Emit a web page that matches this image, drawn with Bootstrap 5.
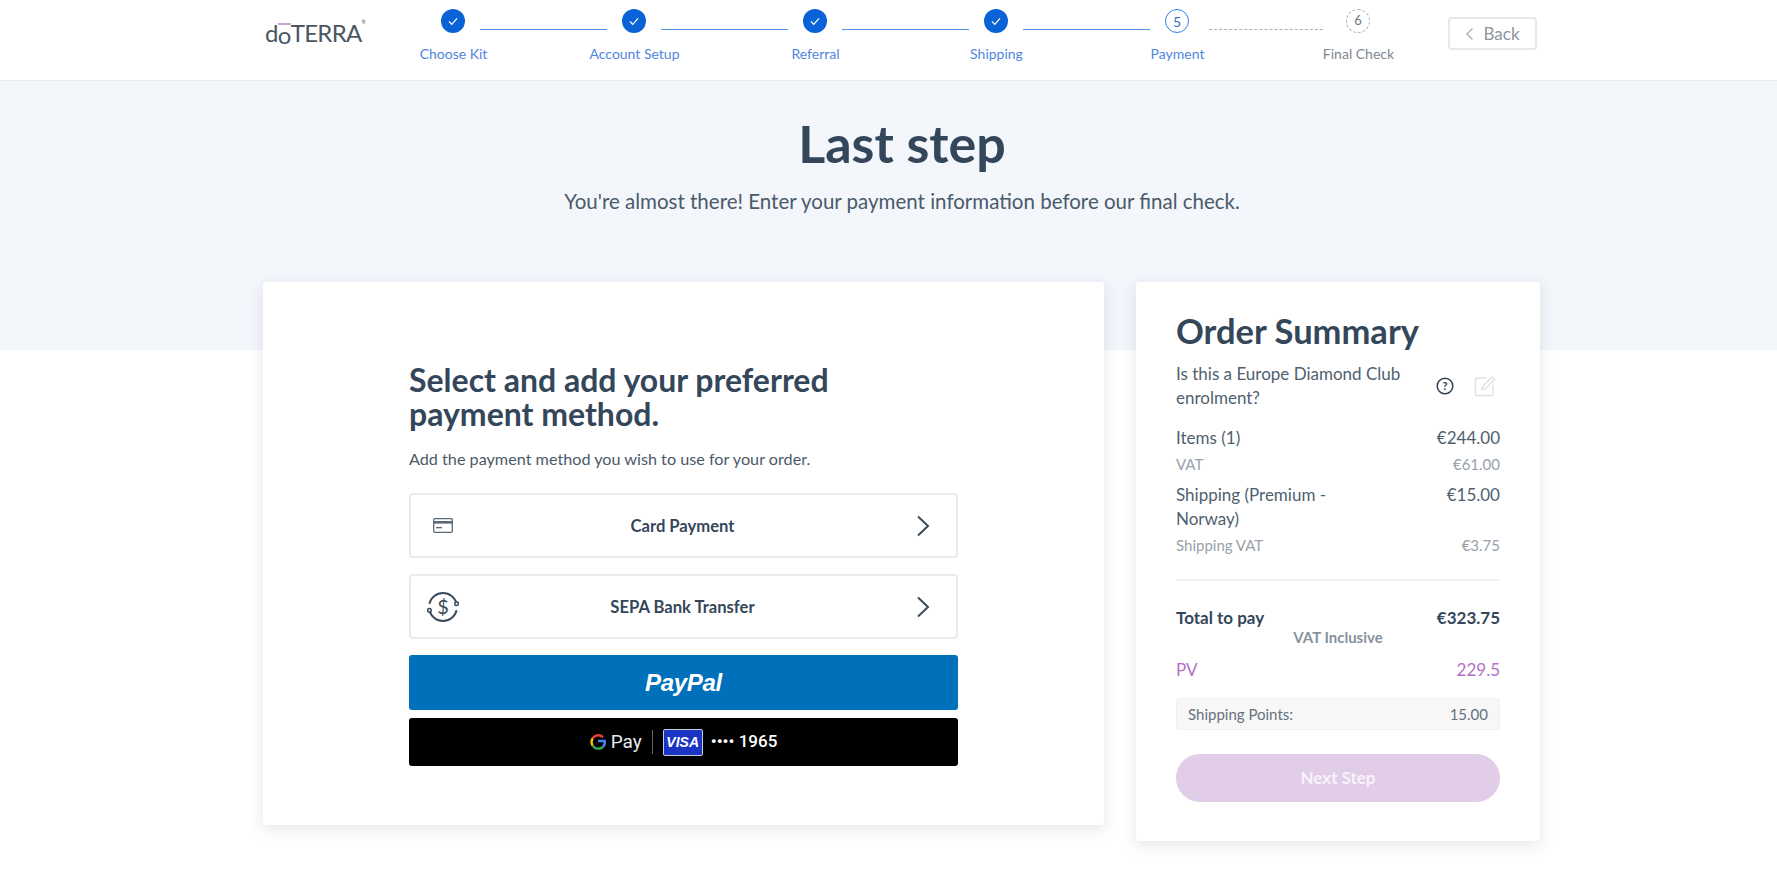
<!DOCTYPE html>
<html lang="en">
<head>
    <meta charset="UTF-8">
    <meta content="width=device-width, initial-scale=1.0" name="viewport">
    <title>doTERRA - Payment</title>
    <link href="https://cdn.jsdelivr.net/npm/bootstrap@5.3.0/dist/css/bootstrap.min.css" rel="stylesheet">
    <style>
        body { font-family: "Lato", "Open Sans", sans-serif; color: #34475a; background: #fff; }
        .top-bar { height: 81px; border-bottom: 1px solid #e9ebee; box-shadow: 0 1px 2px rgba(0,0,0,.03); }
        .top-inner { width: 1277px; margin-left: 263px; padding-left: 2px; }
        .brand { width: 160px; height: 66px; font-size: 24px; letter-spacing: -.7px; color: #4a5661; line-height: 1; }
        .brand-o { display: inline-block; line-height: .8; border-top: 2px solid #c7a3d2; margin-top: 1px; }
        .brand sup { font-size: 5px; top: -2.2em; }
        .stepper { width: 1086px; }
        .step-track { padding-left: 16px; height: 25px; margin-top: 9px; }
        .step-dot { width: 24px; height: 24px; border-radius: 50%; flex: none; font-size: 13px; color: #6d7782; }
        .step-done { background: #0a63d6; }
        .step-now { border: 1px solid #2f7fe6; color: #3d6fb8; font-size: 14px; }
        .step-next { border: 1px dashed #a9b0b8; }
        .step-line { width: 127px; margin: 20px 15px 0; border-top: 1px solid #4f95ea; flex: none; }
        .step-line-dash { border-top: 1px dashed #a9b0b8; width: 114px; margin-left: 20px; margin-right: 23px; }
        .step-labels { margin-top: 11px; margin-left: -62px; font-size: 14px; color: #4f86dd; line-height: 18px; }
        .step-labels > div { width: 181px; text-align: center; }
        .step-labels .step-off { color: #7f8892; }
        .back-btn { width: 89px; height: 33px; border: 2px solid #e6e8ea; border-radius: 4px; color: #8d96a0; font-size: 17px; padding: 0; background: #fff; margin: 8px 0 0 78px; flex: none; }
        .hero { height: 269px; background: #f3f6fb; padding: 32px 0 0 27px; }
        .hero h1 { font-size: 52px; font-weight: 700; color: #34475a; line-height: 60px; margin: 0; }
        .hero p { font-size: 20.5px; color: #4a5a6a; margin: 14px 0 0; line-height: 28px; }
        .page-cols { width: 1277px; margin: -68px 0 0 263px; gap: 32px; padding-bottom: 30px; }
        .sheet { background: #fff; border: 0; border-radius: 4px; box-shadow: 0 4px 16px rgba(40,60,90,.13); }
        .pay-sheet { width: 841px; height: 543px; padding: 81px 146px 0; }
        .pay-sheet h2 { font-size: 32px; font-weight: 700; line-height: 34px; margin: 0; color: #34475a; }
        .pay-note { font-size: 16.2px; line-height: 24px; margin: 16px 0 22px; color: #4a5a6a; }
        .pay-option { height: 65px; border: 2px solid #e9ebed; border-radius: 4px; background: #fff; margin-bottom: 16px; padding: 0; color: #34475a; font-size: 16.6px; font-weight: 700; }
        .pay-icon { width: 64px; flex: none; }
        .pay-arrow { width: 66px; flex: none; }
        .pay-label { padding-top: 2px; }
        .paypal-btn { height: 55px; background: #0070ba; border-radius: 3px; color: #fff; font-family: "Liberation Sans", sans-serif; font-weight: 700; font-style: italic; font-size: 24px; letter-spacing: -.3px; margin-bottom: 8px; padding: 0; }
        .gpay-btn { height: 48px; background: #000; border-radius: 3px; color: #fff; padding: 0; gap: 8px; font-family: "Roboto", sans-serif; }
        .gpay-word { font-size: 19px; color: #e8eaed; margin-left: -3px; }
        .gpay-bar { width: 1px; height: 24px; background: #5f6368; margin: 0 2px; }
        .visa-tag { width: 40px; height: 27px; background: #1a35c4; border: 1px solid #c9ccd4; border-radius: 2px; font: italic 700 14px "Liberation Sans", sans-serif; color: #fff; }
        .card-dots { font-size: 17px; font-weight: 500; color: #fff; }
        .sum-sheet { width: 404px; height: 559px; padding: 26px 40px 0; }
        .sum-sheet h3 { font-size: 34.5px; font-weight: 700; line-height: 46px; margin: 0 0 8px; color: #34475a; }
        .sum-row { font-size: 17px; line-height: 24px; color: #4f5f6f; }
        .sum-tools { gap: 20px; margin-right: 4px; }
        .sum-minor { font-size: 15px; line-height: 20px; color: #98a1aa; margin: 4px 0 9px; }
        .sum-rule { border-top: 2px solid #eef0f2; margin: 24px 0 25px; }
        .sum-total { font-size: 17px; font-weight: 700; line-height: 24px; color: #34475a; }
        .sum-vat { font-size: 15px; font-weight: 700; line-height: 18px; color: #87929c; text-align: center; margin: -2px 0 12px; }
        .sum-pv { font-size: 17px; line-height: 24px; color: #b56fc7; }
        .ship-points { height: 32px; margin-top: 16px; padding: 0 11px; background: #f7f7f8; border: 1px solid #eff0f1; border-radius: 4px; font-size: 15px; color: #66727e; }
        .next-btn { height: 48px; width: 100%; margin-top: 24px; border: 0; border-radius: 24px; background: #e2cde8; color: #f8f2fa; font-size: 17px; font-weight: 700; }
    </style>
</head>
<body>
<header class="top-bar">
    <div class="top-inner d-flex">
        <div class="brand d-flex align-items-center">d<span class="brand-o">o</span>TERRA<sup>®</sup></div>
        <div class="stepper">
            <div class="step-track d-flex align-items-start">
                <span class="step-dot step-done d-flex align-items-center justify-content-center"><svg width="12" height="12" viewBox="0 0 12 12"><path d="M2 6.5l2.800 2.800L10 3.400" fill="none" stroke="#fff" stroke-width="1.2"/></svg></span>
                <span class="step-line"></span>
                <span class="step-dot step-done d-flex align-items-center justify-content-center"><svg width="12" height="12" viewBox="0 0 12 12"><path d="M2 6.5l2.800 2.800L10 3.400" fill="none" stroke="#fff" stroke-width="1.2"/></svg></span>
                <span class="step-line"></span>
                <span class="step-dot step-done d-flex align-items-center justify-content-center"><svg width="12" height="12" viewBox="0 0 12 12"><path d="M2 6.5l2.800 2.800L10 3.400" fill="none" stroke="#fff" stroke-width="1.2"/></svg></span>
                <span class="step-line"></span>
                <span class="step-dot step-done d-flex align-items-center justify-content-center"><svg width="12" height="12" viewBox="0 0 12 12"><path d="M2 6.5l2.800 2.800L10 3.400" fill="none" stroke="#fff" stroke-width="1.2"/></svg></span>
                <span class="step-line"></span>
                <span class="step-dot step-now d-flex align-items-center justify-content-center">5</span>
                <span class="step-line step-line-dash"></span>
                <span class="step-dot step-next d-flex align-items-center justify-content-center">6</span>
                <button class="btn back-btn d-flex align-items-center justify-content-center gap-2" type="button">
                    <svg width="10" height="14" viewBox="0 0 10 14"><path d="M7.5 1.5L2 7l5.500 5.500" fill="none" stroke="#a4acb4" stroke-width="1.3"/></svg>
                    Back
                </button>
            </div>
            <div class="step-labels d-flex">
                <div>Choose Kit</div>
                <div>Account Setup</div>
                <div>Referral</div>
                <div>Shipping</div>
                <div>Payment</div>
                <div class="step-off">Final Check</div>
            </div>
        </div>
    </div>
</header>

<section class="hero text-center">
    <h1>Last step</h1>
    <p>You're almost there! Enter your payment information before our final check.</p>
</section>

<main class="page-cols d-flex align-items-start">
    <div class="card sheet pay-sheet">
        <h2>Select and add your preferred<br>payment method.</h2>
        <p class="pay-note">Add the payment method you wish to use for your order.</p>

        <button class="btn pay-option w-100 d-flex align-items-center" type="button">
            <span class="pay-icon d-flex justify-content-center"><svg width="20" height="15" viewBox="0 0 20 15"><rect x=".7" y=".7" width="18.6" height="13.6" rx="1" fill="none" stroke="#5b6875" stroke-width="1.3"/><rect x="1" y="3" width="18" height="2.6" fill="#5b6875"/><rect x="3" y="9" width="6" height="1.3" fill="#5b6875"/></svg></span>
            <span class="pay-label flex-grow-1 text-center">Card Payment</span>
            <span class="pay-arrow d-flex justify-content-center"><svg width="14" height="22" viewBox="0 0 14 22"><path d="M2 1.5L12 11 2 20.5" fill="none" stroke="#3b4a5a" stroke-width="2"/></svg></span>
        </button>
        <button class="btn pay-option w-100 d-flex align-items-center" type="button">
            <span class="pay-icon d-flex justify-content-center"><svg width="32" height="34" viewBox="0 0 32 34"><path d="M2.400 13.700A14 14 0 0 1 29.600 13.700" fill="none" stroke="#3b4a5a" stroke-width="2"/><path d="M29.600 20.300A14 14 0 0 1 2.400 20.300" fill="none" stroke="#3b4a5a" stroke-width="2"/><circle cx="29.600" cy="13.700" r="1.800" fill="#fff" stroke="#3b4a5a" stroke-width="1.500"/><circle cx="2.400" cy="20.300" r="1.800" fill="#fff" stroke="#3b4a5a" stroke-width="1.500"/><text x="16" y="24" text-anchor="middle" font-size="20" font-weight="400" fill="#3b4a5a" font-family="Lato">$</text></svg></span>
            <span class="pay-label flex-grow-1 text-center">SEPA Bank Transfer</span>
            <span class="pay-arrow d-flex justify-content-center"><svg width="14" height="22" viewBox="0 0 14 22"><path d="M2 1.5L12 11 2 20.5" fill="none" stroke="#3b4a5a" stroke-width="2"/></svg></span>
        </button>

        <button class="btn paypal-btn w-100 d-flex align-items-center justify-content-center" type="button">PayPal</button>
        <button class="btn gpay-btn w-100 d-flex align-items-center justify-content-center" type="button">
            <svg width="16" height="16" viewBox="0 0 18 18"><path d="M14.600 3.600A7.500 7.500 0 0 0 3 5" fill="none" stroke="#ea4335" stroke-width="2.800"/><path d="M3 5a7.500 7.500 0 0 0 0 8" fill="none" stroke="#fbbc04" stroke-width="2.800"/><path d="M3 13a7.500 7.500 0 0 0 11.400 1.600" fill="none" stroke="#34a853" stroke-width="2.800"/><path d="M14.400 14.600A7.500 7.500 0 0 0 16.600 8H9" fill="none" stroke="#4285f4" stroke-width="2.800"/></svg>
            <span class="gpay-word">Pay</span>
            <span class="gpay-bar"></span>
            <span class="visa-tag d-flex align-items-center justify-content-center">VISA</span>
            <span class="card-dots">•••• 1965</span>
        </button>
    </div>

    <aside class="card sheet sum-sheet">
        <h3>Order Summary</h3>
        <div class="sum-row d-flex align-items-center justify-content-between mb-3">
            <span>Is this a Europe Diamond Club<br>enrolment?</span>
            <span class="sum-tools d-flex align-items-center">
                <svg width="18" height="18" viewBox="0 0 18 18"><circle cx="9" cy="9" r="7.800" fill="none" stroke="#2f3e4d" stroke-width="1.5"/><text x="9" y="13" text-anchor="middle" font-size="11" font-weight="700" fill="#2f3e4d" font-family="Lato">?</text></svg>
                <svg width="22" height="22" viewBox="0 0 22 22"><path d="M12 3H2.500a1 1 0 0 0-1 1v15.500a1 1 0 0 0 1 1H18a1 1 0 0 0 1-1V10" fill="none" stroke="#dfe3e7" stroke-width="1.5"/><path d="M8 14.500l.8-3.400L18 2l2.500 2.500-9.200 9.200z" fill="none" stroke="#dfe3e7" stroke-width="1.5"/></svg>
            </span>
        </div>
        <div class="sum-row d-flex justify-content-between"><span>Items (1)</span><span>€244.00</span></div>
        <div class="sum-minor d-flex justify-content-between"><span>VAT</span><span>€61.00</span></div>
        <div class="sum-row d-flex justify-content-between"><span>Shipping (Premium -<br>Norway)</span><span>€15.00</span></div>
        <div class="sum-minor d-flex justify-content-between mb-0"><span>Shipping VAT</span><span>€3.75</span></div>
        <div class="sum-rule"></div>
        <div class="sum-total d-flex justify-content-between"><span>Total to pay</span><span>€323.75</span></div>
        <div class="sum-vat">VAT Inclusive</div>
        <div class="sum-pv d-flex justify-content-between"><span>PV</span><span>229.5</span></div>
        <div class="ship-points d-flex align-items-center justify-content-between"><span>Shipping Points:</span><span>15.00</span></div>
        <button class="btn next-btn" type="button">Next Step</button>
    </aside>
</main>

<script src="https://cdn.jsdelivr.net/npm/bootstrap@5.3.0/dist/js/bootstrap.bundle.min.js"></script>
</body>
</html>
